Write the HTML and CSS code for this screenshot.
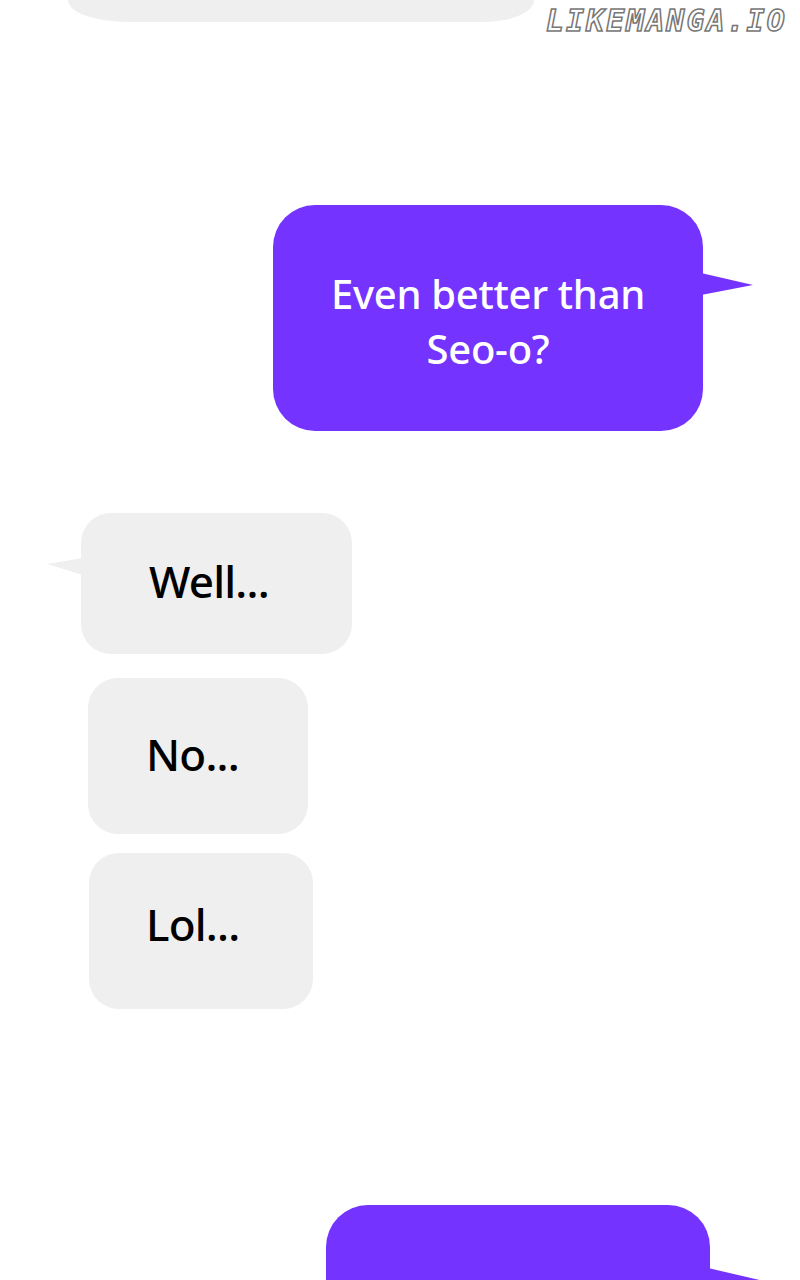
FILE: index.html
```html
<!DOCTYPE html>
<html lang="en">
<head>
    <meta charset="UTF-8">
    <meta name="viewport" content="width=device-width, initial-scale=1.0">
    <title>Chat</title>
    <link rel="stylesheet" href="styles.css">
</head>
<body>

<div class="page">
    <!-- site watermark -->
    <div class="watermark">LIKEMANGA.IO</div>

    <div class="row">
        <div class="bubble-cut"></div>
    </div>

    <div class="row row-right">
        <div class="bubble purple first">
            <span>Even better than<br>Seo-o?</span>
        </div>
    </div>

    <div class="row">
        <div class="bubble gray well">Well...</div>
    </div>

    <div class="row">
        <div class="bubble gray no">No...</div>
    </div>

    <div class="row">
        <div class="bubble gray lol">Lol...</div>
    </div>

    <div class="row row-right">
        <div class="bubble purple last"></div>
    </div>
</div>

</body>
</html>
```

FILE: styles.css
```css
/* Reset and page frame */
html, body {
    margin: 0;
    padding: 0;
    height: 1280px;
    overflow: hidden;
    background: #fff;
    font-family: "Noto Sans", "Open Sans", sans-serif;
}

.page {
    position: relative;
    width: 800px;
    height: 1280px;
    overflow: hidden;
    display: flex;
    flex-direction: column;
}

.row {
    display: flex;
}

/* Watermark in the top right corner */
.watermark {
    position: absolute;
    top: 4px;
    left: 546px;
    font-family: "DejaVu Sans Mono", "Liberation Mono", monospace;
    font-weight: bold;
    font-style: italic;
    font-size: 30px;
    line-height: 34px;
    letter-spacing: 2px;
    color: #fff;
    -webkit-text-stroke: 1.5px #777;
    z-index: 2;
}

/* Bubble left over from the previous panel */
.bubble-cut {
    margin-left: 68px;
    width: 466px;
    height: 22px;
    background: #efefef;
    border-radius: 0 0 60px 70px / 0 0 26px 26px;
}

/* Shared bubble */
.bubble {
    position: relative;
    box-sizing: border-box;
}

.purple {
    background: #7433fe;
    color: #fff;
    border-radius: 42px;
}

.purple::after {
    content: "";
    position: absolute;
    right: -50px;
    width: 52px;
    height: 22px;
    background: #7433fe;
    clip-path: polygon(0 0, 100% 55%, 0 100%);
}

.first {
    margin-top: 183px;
    margin-left: 273px;
    width: 430px;
    height: 226px;
    padding-top: 61px;
    text-align: center;
    font-size: 40px;
    font-weight: 500;
    letter-spacing: -0.3px;
    line-height: 55px;
}

.first::after {
    top: 68px;
}

/* cut off by the bottom of the page */
.last {
    margin-top: 196px;
    margin-left: 326px;
    width: 384px;
    height: 75px;
    border-radius: 42px 42px 0 0;
}

.last::after {
    top: 63px;
}

/* Grey replies */
.gray {
    background: #efefef;
    color: #000;
    border-radius: 30px;
    font-size: 44px;
    font-weight: 500;
    letter-spacing: -0.8px;
    line-height: 60px;
    display: flex;
    align-items: flex-start;
}

.well {
    margin-top: 82px;
    margin-left: 81px;
    width: 271px;
    height: 141px;
    padding: 38px 0 0 68px;
}

.well::before {
    content: "";
    position: absolute;
    left: -34px;
    top: 45px;
    width: 36px;
    height: 17px;
    background: #efefef;
    clip-path: polygon(100% 0, 0 35%, 100% 100%);
}

.no {
    margin-top: 24px;
    margin-left: 88px;
    width: 220px;
    height: 156px;
    padding: 46px 0 0 58px;
}

.lol {
    margin-top: 19px;
    margin-left: 89px;
    width: 224px;
    height: 156px;
    padding: 41px 0 0 57px;
}
```
